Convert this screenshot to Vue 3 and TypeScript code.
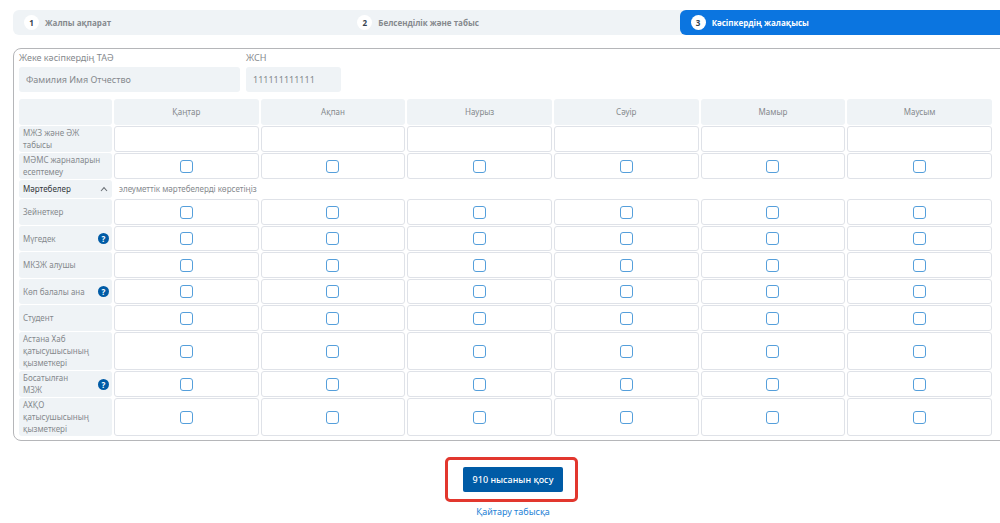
<script setup lang="ts">
import { ref } from 'vue'

interface Row {
  id: string
  label: string
  help?: boolean
}

const steps = ['Жалпы ақпарат', 'Белсенділік және табыс', 'Кәсіпкердің жалақысы']
const months = ['Қаңтар', 'Ақпан', 'Наурыз', 'Сәуір', 'Мамыр', 'Маусым']
const statuses: Row[] = [
  { id: 'pensioner', label: 'Зейнеткер' },
  { id: 'disabled', label: 'Мүгедек', help: true },
  { id: 'recipient', label: 'МКЗЖ алушы' },
  { id: 'mother', label: 'Көп балалы ана', help: true },
  { id: 'student', label: 'Студент' },
  { id: 'hub', label: 'Астана Хаб қатысушысының қызметкері' },
  { id: 'exempt', label: 'Босатылған МЗЖ', help: true },
  { id: 'aifc', label: 'АХҚО қатысушысының қызметкері' },
]

const fullName = ref('Фамилия Имя Отчество')
const iin = ref('111111111111')
const income = ref<string[]>(months.map(() => ''))
const checked = ref<string[]>([])
const open = ref(true)
</script>

<template>
  <main class="page">
    <div class="content">
      <ol class="steps">
        <li v-for="(step, i) in steps" :key="step" class="step" :class="{ active: i === 2 }">
          <span class="num">{{ i + 1 }}</span>
          <span>{{ step }}</span>
        </li>
      </ol>

      <section class="panel">
        <div class="fields">
          <div class="field name">
            <label for="full-name">Жеке кәсіпкердің ТАӘ</label>
            <input id="full-name" v-model="fullName" type="text" readonly />
          </div>
          <div class="field iin">
            <label for="iin">ЖСН</label>
            <input id="iin" v-model="iin" type="text" readonly />
          </div>
        </div>

        <table>
          <thead>
            <tr>
              <td class="head first"></td>
              <th v-for="m in months" :key="m" class="head" scope="col">{{ m }}</th>
            </tr>
          </thead>
          <tbody>
            <tr>
              <th class="label" scope="row">МЖЗ және ӘЖ табысы</th>
              <td v-for="(m, i) in months" :key="m" class="cell">
                <input v-model="income[i]" class="amount" type="text" :aria-label="'МЖЗ және ӘЖ табысы, ' + m" />
              </td>
            </tr>
            <tr>
              <th class="label" scope="row">МӘМС жарналарын есептемеу</th>
              <td v-for="m in months" :key="m" class="cell">
                <input v-model="checked" type="checkbox" :value="'mams-' + m" :aria-label="'МӘМС жарналарын есептемеу, ' + m" />
              </td>
            </tr>
            <tr class="group">
              <th class="label" scope="row">
                <button type="button" class="toggle" :aria-expanded="open" @click="open = !open">
                  <span>Мәртебелер</span>
                  <svg width="8" height="6" viewBox="0 0 8 6" aria-hidden="true">
                    <path d="M1 5 4 1.6 7 5" fill="none" stroke="currentColor" stroke-width="1.1" />
                  </svg>
                </button>
              </th>
              <td class="hint" colspan="6">элеуметтік мәртебелерді көрсетіңіз</td>
            </tr>
            <template v-if="open">
              <tr v-for="row in statuses" :key="row.id">
                <th class="label" scope="row">
                  <div class="label-box">
                    <span>{{ row.label }}</span>
                    <button v-if="row.help" type="button" class="help" :aria-label="row.label">?</button>
                  </div>
                </th>
                <td v-for="m in months" :key="m" class="cell">
                  <input v-model="checked" type="checkbox" :value="row.id + '-' + m" :aria-label="row.label + ', ' + m" />
                </td>
              </tr>
            </template>
          </tbody>
        </table>
      </section>

      <footer class="actions">
        <div class="highlight">
          <button type="button" class="submit">910 нысанын қосу</button>
        </div>
        <a href="#income">Қайтару табысқа</a>
      </footer>
    </div>
  </main>
</template>

<style>
body {
  background: #fff;
}
</style>

<style scoped>
.page {
  overflow: hidden;
  padding: 10px 0 4px 13px;
  font-family: "Noto Sans", "Open Sans", sans-serif;
  font-size: 8px;
  line-height: 12px;
  color: #85898d;
}
.page *,
.page *::after {
  box-sizing: border-box;
}
.content {
  margin-right: -13px;
}
button,
input {
  font: inherit;
  color: inherit;
  margin: 0;
}
.steps {
  display: grid;
  grid-template-columns: repeat(3, 1fr);
  list-style: none;
  margin: 0 0 13px;
  padding: 0;
  background: #eff3f6;
  border-radius: 6px;
  font-family: "Open Sans", "Noto Sans", sans-serif;
  font-weight: 700;
}
.step {
  display: flex;
  align-items: center;
  gap: 6px;
  height: 25px;
  padding-left: 11px;
}
.step.active {
  background: #0b75e0;
  color: #fff;
  border-radius: 6px;
}
.num {
  display: grid;
  place-items: center;
  width: 15px;
  height: 15px;
  border-radius: 50%;
  background: #fff;
  color: #34424f;
}
.panel {
  border: 1px solid #b5b6b9;
  border-radius: 8px;
  padding: 3px 18px 3px 3px;
}
.fields {
  display: flex;
  gap: 6px;
  margin: 0 2px 6px;
}
.field {
  display: flex;
  flex-direction: column;
  gap: 3px;
  font-size: 9px;
}
.field.name {
  width: 221px;
}
.field.iin {
  width: 95px;
}
.field input {
  width: 100%;
  height: 25px;
  border: 0;
  border-radius: 3px;
  padding: 0 7px;
  background: #eff3f6;
}
table {
  width: 100%;
  table-layout: fixed;
  border-collapse: separate;
  border-spacing: 2px 1px;
}
th,
td {
  padding: 0;
  font-weight: 400;
}
tr {
  height: 25px;
}
thead tr,
tbody tr:nth-child(even) {
  height: 26px;
}
tbody tr:nth-child(-n + 2) {
  height: 26px;
}
.head {
  background: #eff3f6;
  border-radius: 3px;
  text-align: center;
}
.first {
  width: 93px;
}
.label {
  background: #eff3f6;
  border-radius: 3px;
  padding: 1px 4px;
  text-align: left;
}
.label-box {
  display: flex;
  align-items: center;
  justify-content: space-between;
  gap: 9px;
}
.cell {
  border: 1px solid #dfe2e8;
  border-radius: 3px;
  text-align: center;
  vertical-align: middle;
}
.amount {
  display: block;
  width: 100%;
  height: 22px;
  border: 0;
  padding: 0 6px;
  background: transparent;
  outline: none;
}
input[type="checkbox"] {
  appearance: none;
  display: block;
  width: 13px;
  height: 13px;
  margin: 0 auto;
  border: 1px solid #559fdb;
  border-radius: 3px;
  background: #fff;
}
input[type="checkbox"]:checked {
  background: #0b75e0;
}
tbody tr.group {
  height: 18px;
}
.toggle {
  display: flex;
  align-items: center;
  justify-content: space-between;
  width: 100%;
  padding: 0;
  border: 0;
  background: none;
  color: #33373b;
}
.toggle svg {
  color: #6b7076;
}
.hint {
  padding-left: 5px;
}
.help {
  flex: none;
  display: grid;
  place-items: center;
  width: 11px;
  height: 11px;
  margin-right: -1px;
  padding: 0;
  border: 0;
  border-radius: 50%;
  background: #005ba6;
  color: #fff;
  font-weight: 700;
}
.actions {
  display: flex;
  flex-direction: column;
  align-items: center;
  gap: 14px;
  margin-top: 26px;
  font-size: 9px;
}
.highlight {
  position: relative;
}
.highlight::after {
  content: "";
  position: absolute;
  inset: -10px -15px -10px -18px;
  border: 3px solid #e2372e;
  border-radius: 5px;
  pointer-events: none;
}
.submit {
  display: block;
  height: 25px;
  padding: 0 10px;
  border: 0;
  border-radius: 2px;
  background: #005ba6;
  color: #fff;
  font-weight: 500;
}
.actions a {
  color: #2582d6;
  text-decoration: none;
}
</style>
